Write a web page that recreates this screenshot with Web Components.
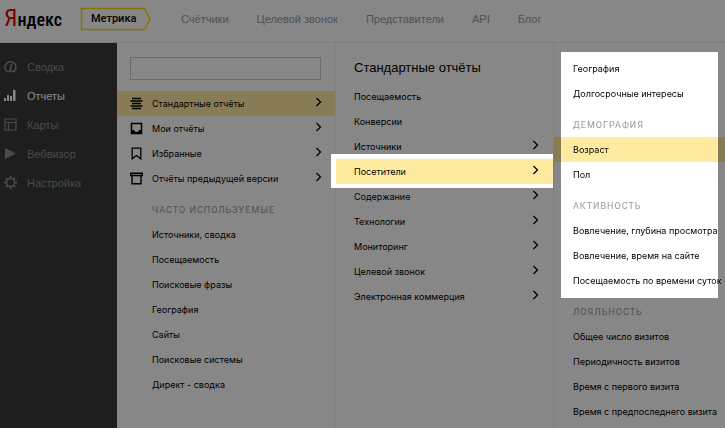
<!DOCTYPE html>
<html lang="ru">
<head>
<meta charset="UTF-8">
<meta name="viewport" content="width=device-width, initial-scale=1">
<title>Яндекс Метрика</title>
<style>
    html, body {
        margin: 0;
        min-height: 100vh;
        background: #fff;
        font-family: "Liberation Sans", Arial, sans-serif;
        font-size: 11px;
        color: #000;
    }
</style>
</head>
<body>
<metrika-app></metrika-app>

<script>
const ICONS = {
    gauge: '<path d="M3 11.500a5.500 5.500 0 1 1 7 0z" fill="none" stroke="currentColor" stroke-width="1.500"/><path d="M6 11 7.500 4" fill="none" stroke="currentColor" stroke-width="1.500"/>',
    chart: '<path d="M0 9h2v3H0zM3 6h2v6H3zM6 7h2v5H6zM9 1h2.500v11H9z" fill="currentColor"/>',
    layout: '<path d="M1 1h11v11H1zM1 4.500h11M4.500 4.500V12" fill="none" stroke="currentColor" stroke-width="1.200"/>',
    play: '<path d="M1 1v11l11-5.500z" fill="currentColor"/>',
    gear: '<circle cx="6.500" cy="6.500" r="4" fill="none" stroke="currentColor" stroke-width="1.500"/><path d="M6.500 0v2.500M6.500 10.500V13M0 6.500h2.500M10.500 6.500H13M2 2l1.600 1.600M9.400 9.400 11 11M11 2 9.400 3.600M3.600 9.400 2 11" stroke="currentColor" stroke-width="2"/>',
    lines: '<path d="M2 1.500h9M0.500 4h12M2 6.500h9M0.500 9h12M2 11.500h9" stroke="currentColor" stroke-width="1.500"/>',
    tray: '<path d="M1.500 1.500h10v10h-10z" fill="none" stroke="currentColor" stroke-width="1.500"/><path d="M1 8h3c.3 1.300 1.300 2 2.500 2S8.700 9.300 9 8h3v4H1z" fill="currentColor"/>',
    bookmark: '<path d="M2.200 1.200h8.600v10.600L6.500 8.500l-4.300 3.300z" fill="none" stroke="currentColor" stroke-width="1.300"/>',
    box: '<path d="M0.700 1.200h11.600v2.300H0.700zM2 3.500v8.300h9V3.500" fill="none" stroke="currentColor" stroke-width="1.400"/>',
    chevron: '<path d="M4.500 1 8.500 5 4.500 9" fill="none" stroke="currentColor" stroke-width="1.300"/>'
};

function icon(name) {
    return `<svg width="13" height="13" viewBox="0 0 13 13" aria-hidden="true">${ICONS[name]}</svg>`;
}

class MetrikaHeader extends HTMLElement {
    constructor() {
        super();
        this.attachShadow({ mode: 'open' });
    }

    connectedCallback() {
        const links = ['Счётчики', 'Целевой звонок', 'Представители', 'API', 'Блог'];
        this.shadowRoot.innerHTML = `
            <style>
                :host {
                    display: flex;
                    align-items: center;
                    height: 43px;
                    padding-bottom: 4px;
                    box-sizing: border-box;
                    border-bottom: 1px solid #ececec;
                }

                a {
                    text-decoration: none;
                    color: inherit;
                    white-space: nowrap;
                }

                .logo {
                    width: 76px;
                    padding-left: 4px;
                    font-family: "Roboto Condensed", Roboto, sans-serif;
                    font-size: 18px;
                    font-weight: 500;
                    line-height: 32px;
                }

                .logo span {
                    font-size: 24px;
                    font-weight: 400;
                    color: #e00;
                }

                .product {
                    display: grid;
                    width: 72px;
                    height: 24px;
                    font-family: Roboto, sans-serif;
                    font-weight: 500;
                    line-height: 24px;
                }

                .product > * {
                    grid-area: 1 / 1;
                }

                .product span {
                    padding-left: 11px;
                }

                nav {
                    display: flex;
                    gap: 28px;
                    margin-left: 29px;
                    color: #999;
                }
            </style>
            <a class="logo" href="#"><span>Я</span>ндекс</a>
            <a class="product" href="#">
                <svg width="72" height="24" viewBox="0 0 72 24" aria-hidden="true"><path d="M1.500 1.500h63l5.500 10.500-5.500 10.500h-63z" fill="none" stroke="#ffdb00" stroke-width="1.500"/></svg>
                <span>Метрика</span>
            </a>
            <nav>${links.map(text => `<a href="#">${text}</a>`).join('')}</nav>
        `;
    }
}

class SideMenu extends HTMLElement {
    constructor() {
        super();
        this.attachShadow({ mode: 'open' });
    }

    connectedCallback() {
        const items = [
            ['gauge', 'Сводка'],
            ['chart', 'Отчеты'],
            ['layout', 'Карты'],
            ['play', 'Вебвизор'],
            ['gear', 'Настройка']
        ];
        this.shadowRoot.innerHTML = `
            <style>
                :host {
                    display: block;
                    padding-top: 9px;
                    background: #393939;
                    color: #8c8c8c;
                }

                a {
                    display: flex;
                    align-items: center;
                    gap: 10px;
                    height: 29px;
                    padding-left: 4px;
                    color: inherit;
                    text-decoration: none;
                }

                a.active {
                    color: #fff;
                }
            </style>
            <nav>
                ${items.map(([name, text]) => `
                    <a href="#" class="${name === 'chart' ? 'active' : ''}">${icon(name)}<span>${text}</span></a>
                `).join('')}
            </nav>
        `;
    }
}

class MenuTitle extends HTMLElement {
    constructor() {
        super();
        this.attachShadow({ mode: 'open' });
        this.shadowRoot.innerHTML = `
            <style>
                :host {
                    display: block;
                    padding: 7px 0 0 var(--inset, 0);
                    font-family: Roboto, sans-serif;
                    font-size: 9px;
                    line-height: 24px;
                    letter-spacing: 1px;
                    text-transform: uppercase;
                    white-space: nowrap;
                    color: #999;
                }
            </style>
            <slot></slot>
        `;
    }
}

class MenuItem extends HTMLElement {
    constructor() {
        super();
        this.attachShadow({ mode: 'open' });
    }

    connectedCallback() {
        const name = this.getAttribute('icon');
        this.shadowRoot.innerHTML = `
            <style>
                :host {
                    display: block;
                    font-family: Inter, "Liberation Sans", sans-serif;
                    font-size: 9px;
                }

                a {
                    display: flex;
                    align-items: center;
                    height: 25px;
                    padding: 0 11px 0 var(--inset, 0);
                    color: inherit;
                    text-decoration: none;
                    white-space: nowrap;
                }

                :host([icon]) a {
                    gap: 9px;
                    padding-left: 13px;
                }

                span {
                    flex: 1;
                }

                :host([active]) a {
                    background: #ffeba0;
                }

                /* lifted above the scrim */
                :host([spot]) {
                    position: relative;
                    z-index: 2;
                    box-shadow: -5px -5px #fff, -5px 4px #fff, 0 -5px #fff, 0 4px #fff;
                }
            </style>
            <a href="#">${name ? icon(name) : ''}<span><slot></slot></span>${this.hasAttribute('more') ? icon('chevron') : ''}</a>
        `;
    }
}

class ReportMenu extends HTMLElement {
    constructor() {
        super();
        this.attachShadow({ mode: 'open' });
        this.shadowRoot.innerHTML = `
            <style>
                :host {
                    --inset: 35px;
                    display: block;
                    min-width: 0;
                }

                input {
                    display: block;
                    width: calc(100% - 28px);
                    height: 23px;
                    margin: 14px 15px 11px 13px;
                    box-sizing: border-box;
                    border: 1px solid #ccc;
                    border-radius: 0;
                    background: #fff;
                    font: inherit;
                }
            </style>
            <input type="text" aria-label="Поиск отчёта">
            <menu-item icon="lines" more active>Стандартные отчёты</menu-item>
            <menu-item icon="tray" more>Мои отчёты</menu-item>
            <menu-item icon="bookmark" more>Избранные</menu-item>
            <menu-item icon="box" more>Отчёты предыдущей версии</menu-item>
            <menu-title>Часто используемые</menu-title>
            <menu-item>Источники, сводка</menu-item>
            <menu-item>Посещаемость</menu-item>
            <menu-item>Поисковые фразы</menu-item>
            <menu-item>География</menu-item>
            <menu-item>Сайты</menu-item>
            <menu-item>Поисковые системы</menu-item>
            <menu-item>Директ - сводка</menu-item>
        `;
    }
}

class StandardMenu extends HTMLElement {
    constructor() {
        super();
        this.attachShadow({ mode: 'open' });
        this.shadowRoot.innerHTML = `
            <style>
                :host {
                    --inset: 18px;
                    display: block;
                    min-width: 0;
                    border-right: 1px solid #f0f0f0;
                    box-shadow: -1px 0 #f4f4f4;
                }

                h2 {
                    margin: 0;
                    padding: 15px 0 6px 18px;
                    font-size: 13px;
                    font-weight: normal;
                    line-height: 20px;
                    white-space: nowrap;
                }
            </style>
            <h2>Стандартные отчёты</h2>
            <menu-item>Посещаемость</menu-item>
            <menu-item>Конверсии</menu-item>
            <menu-item more>Источники</menu-item>
            <menu-item more active spot>Посетители</menu-item>
            <menu-item more>Содержание</menu-item>
            <menu-item more>Технологии</menu-item>
            <menu-item more>Мониторинг</menu-item>
            <menu-item more>Целевой звонок</menu-item>
            <menu-item more>Электронная коммерция</menu-item>
        `;
    }
}

class VisitorMenu extends HTMLElement {
    constructor() {
        super();
        this.attachShadow({ mode: 'open' });
        this.shadowRoot.innerHTML = `
            <style>
                :host {
                    --inset: 12px;
                    display: block;
                    min-width: 0;
                    padding: 9px 7px 0;
                }

                .spot {
                    position: relative;
                    z-index: 2;
                    padding: 4px 0 5px;
                    background: #fff;
                }

                /* the selected row runs on under the scrim on both sides */
                [active] {
                    box-shadow: -7px 0 #877d55, 7px 0 #877d55;
                }

                .rest {
                    margin-top: -5px;
                }
            </style>
            <div class="spot">
                <menu-item>География</menu-item>
                <menu-item>Долгосрочные интересы</menu-item>
                <menu-title>Демография</menu-title>
                <menu-item active>Возраст</menu-item>
                <menu-item>Пол</menu-item>
                <menu-title>Активность</menu-title>
                <menu-item>Вовлечение, глубина просмотра</menu-item>
                <menu-item>Вовлечение, время на сайте</menu-item>
                <menu-item>Посещаемость по времени суток</menu-item>
            </div>
            <div class="rest">
                <menu-title>Лояльность</menu-title>
                <menu-item>Общее число визитов</menu-item>
                <menu-item>Периодичность визитов</menu-item>
                <menu-item>Время с первого визита</menu-item>
                <menu-item>Время с предпоследнего визита</menu-item>
            </div>
        `;
    }
}

class MetrikaApp extends HTMLElement {
    constructor() {
        super();
        this.attachShadow({ mode: 'open' });
        this.shadowRoot.innerHTML = `
            <style>
                :host {
                    display: flex;
                    flex-direction: column;
                    min-height: 100vh;
                }

                main {
                    flex: 1;
                    display: grid;
                    grid-template-columns: 117px 219fr 218fr 171fr;
                }

                .scrim {
                    position: fixed;
                    inset: 0;
                    z-index: 1;
                    background: rgba(0, 0, 0, 0.47);
                    pointer-events: none;
                }
            </style>
            <metrika-header></metrika-header>
            <main>
                <side-menu></side-menu>
                <report-menu></report-menu>
                <standard-menu></standard-menu>
                <visitor-menu></visitor-menu>
            </main>
            <div class="scrim"></div>
        `;
    }
}

customElements.define('metrika-header', MetrikaHeader);
customElements.define('side-menu', SideMenu);
customElements.define('menu-title', MenuTitle);
customElements.define('menu-item', MenuItem);
customElements.define('report-menu', ReportMenu);
customElements.define('standard-menu', StandardMenu);
customElements.define('visitor-menu', VisitorMenu);
customElements.define('metrika-app', MetrikaApp);
</script>
</body>
</html>
